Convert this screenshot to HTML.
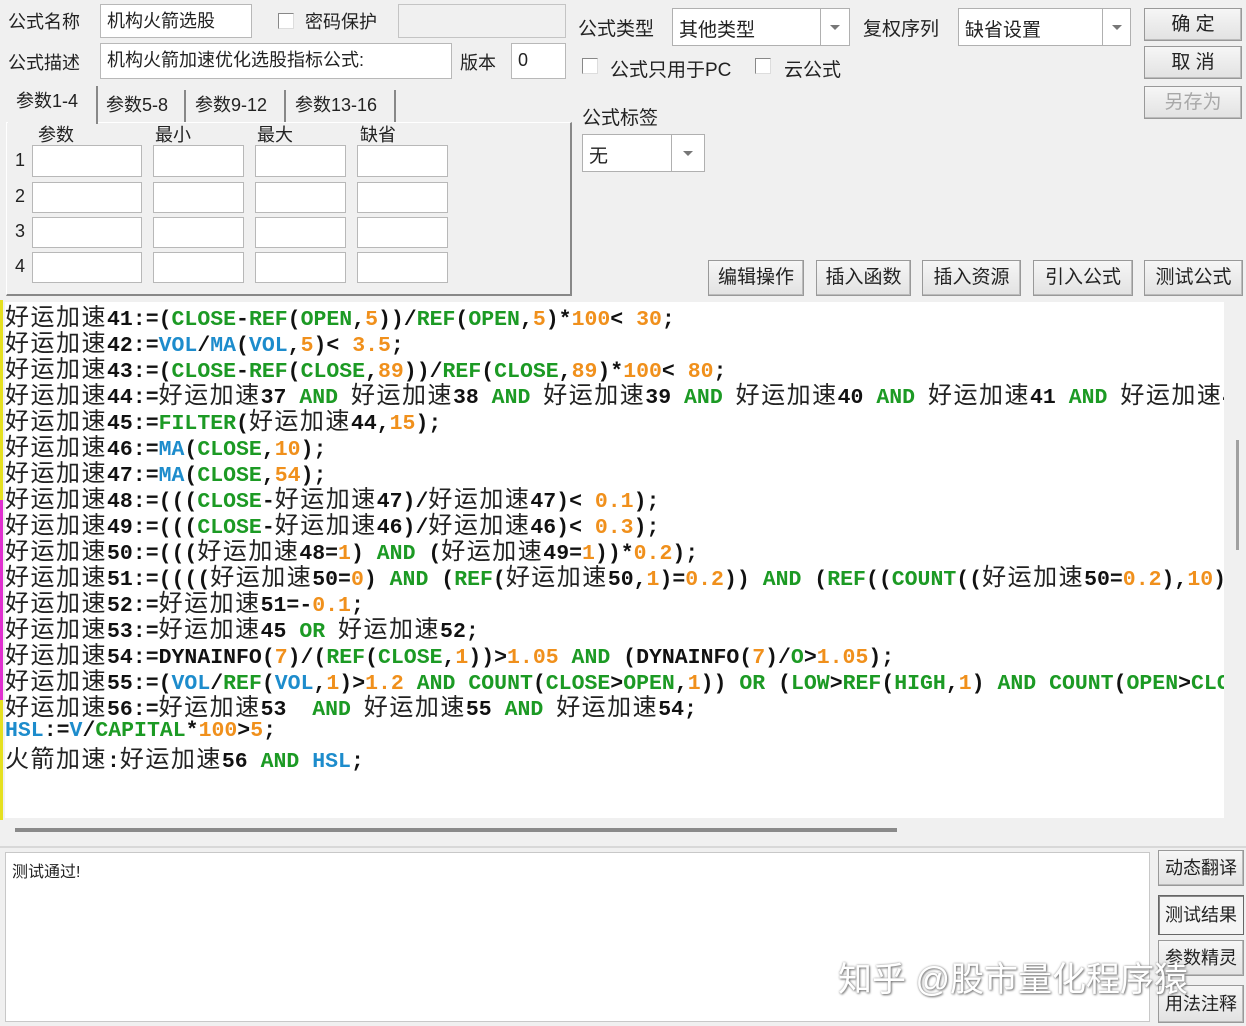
<!DOCTYPE html>
<html><head><meta charset="utf-8">
<style>
*{margin:0;padding:0;box-sizing:border-box}
body{width:1246px;height:1026px;background:#f0f0f0;position:relative;overflow:hidden;font-family:"Liberation Sans","Noto Sans CJK SC",sans-serif;font-size:18px;color:#222}
.a{position:absolute}
.inp{position:absolute;background:#fff;border:1px solid #b8b8b8;padding-left:6px;font-size:18px;line-height:32px}
.dis{position:absolute;background:#f0f0f0;border:1px solid #c4c4c4}
.cb{position:absolute;width:16px;height:16px;background:#fff;border:1px solid #888;border-right-color:#ddd;border-bottom-color:#ddd}
.btn{position:absolute;background:linear-gradient(#f6f6f6,#e2e2e2);border:1px solid #999;box-shadow:inset -1px -1px 0 #bbb;text-align:center;font-size:19px;line-height:32px;color:#222}
.combo{position:absolute;background:#fff;border:1px solid #b0b0b0}
.combo .t{position:absolute;left:6px;top:6px;font-size:19px}
.combo .dd{position:absolute;right:0;top:0;bottom:0;border-left:1px solid #b0b0b0}
.combo .dd:after{content:"";position:absolute;left:50%;top:50%;margin:-2px 0 0 -5px;border:5px solid transparent;border-top:5px solid #777}
.tab{position:absolute;top:90px;height:32px;font-size:18px;line-height:30px;padding-left:8px;border-right:2px solid #888}
.ed{position:absolute;left:5px;top:302px;width:1219px;height:516px;background:#fff;overflow:hidden;font-family:"Liberation Mono",monospace;font-weight:bold;font-size:21.5px;line-height:26px;color:#111}
.ed div{height:26px;white-space:pre}
.c{font-family:"Noto Sans CJK SC",sans-serif;font-weight:normal;font-size:24px;letter-spacing:1.5px;color:#222}
.g{color:#1c9a24}.b{color:#1d8ccc}.o{color:#f0901c}
</style></head><body>
<div class="a" style="left:0;top:300px;width:3px;height:520px;background:#e5e020"></div>
<div class="a" style="left:0;top:500px;width:3px;height:200px;background:#e030d0"></div>

<div class="a" style="left:8px;top:8px">公式名称</div>
<div class="inp" style="left:100px;top:4px;width:152px;height:34px">机构火箭选股</div>
<div class="cb" style="left:278px;top:13px"></div>
<div class="a" style="left:305px;top:8px">密码保护</div>
<div class="dis" style="left:398px;top:4px;width:168px;height:34px"></div>
<div class="a" style="left:8px;top:49px">公式描述</div>
<div class="inp" style="left:100px;top:43px;width:352px;height:36px">机构火箭加速优化选股指标公式:</div>
<div class="a" style="left:460px;top:49px">版本</div>
<div class="inp" style="left:511px;top:43px;width:55px;height:36px">0</div>

<div class="a" style="left:6px;top:122px;width:566px;height:174px;border:1px solid #fff;border-right:2px solid #888;border-bottom:2px solid #888"></div>
<div class="tab" style="left:8px;top:86px;height:38px;background:#f0f0f0;width:90px;z-index:2">参数1-4</div>
<div class="tab" style="left:98px;width:88px">参数5-8</div>
<div class="tab" style="left:187px;width:99px">参数9-12</div>
<div class="tab" style="left:287px;width:109px">参数13-16</div>
<div class="a" style="left:38px;top:121px">参数</div>
<div class="a" style="left:155px;top:121px">最小</div>
<div class="a" style="left:257px;top:121px">最大</div>
<div class="a" style="left:360px;top:121px">缺省</div>
<div class="a" style="left:15px;top:150px">1</div>
<div class="a" style="left:15px;top:186px">2</div>
<div class="a" style="left:15px;top:221px">3</div>
<div class="a" style="left:15px;top:256px">4</div>
<div class="inp" style="left:32px;top:145px;width:110px;height:32px"></div><div class="inp" style="left:153px;top:145px;width:91px;height:32px"></div><div class="inp" style="left:255px;top:145px;width:91px;height:32px"></div><div class="inp" style="left:357px;top:145px;width:91px;height:32px"></div>
<div class="inp" style="left:32px;top:182px;width:110px;height:31px"></div><div class="inp" style="left:153px;top:182px;width:91px;height:31px"></div><div class="inp" style="left:255px;top:182px;width:91px;height:31px"></div><div class="inp" style="left:357px;top:182px;width:91px;height:31px"></div>
<div class="inp" style="left:32px;top:217px;width:110px;height:31px"></div><div class="inp" style="left:153px;top:217px;width:91px;height:31px"></div><div class="inp" style="left:255px;top:217px;width:91px;height:31px"></div><div class="inp" style="left:357px;top:217px;width:91px;height:31px"></div>
<div class="inp" style="left:32px;top:252px;width:110px;height:31px"></div><div class="inp" style="left:153px;top:252px;width:91px;height:31px"></div><div class="inp" style="left:255px;top:252px;width:91px;height:31px"></div><div class="inp" style="left:357px;top:252px;width:91px;height:31px"></div>

<div class="a" style="left:578px;top:14px;font-size:19px">公式类型</div>
<div class="combo" style="left:672px;top:8px;width:178px;height:38px"><span class="t">其他类型</span><div class="dd" style="width:29px"></div></div>
<div class="a" style="left:863px;top:14px;font-size:19px">复权序列</div>
<div class="combo" style="left:958px;top:8px;width:173px;height:38px"><span class="t">缺省设置</span><div class="dd" style="width:28px"></div></div>
<div class="btn" style="left:1144px;top:8px;width:98px;height:33px">确 定</div>
<div class="btn" style="left:1144px;top:46px;width:98px;height:33px">取 消</div>
<div class="btn" style="left:1144px;top:86px;width:98px;height:33px;color:#a8a8a8">另存为</div>
<div class="cb" style="left:582px;top:58px"></div>
<div class="a" style="left:610px;top:55px;font-size:19px">公式只用于PC</div>
<div class="cb" style="left:755px;top:58px"></div>
<div class="a" style="left:784px;top:55px;font-size:19px">云公式</div>
<div class="a" style="left:582px;top:103px;font-size:19px">公式标签</div>
<div class="combo" style="left:582px;top:134px;width:123px;height:38px"><span class="t">无</span><div class="dd" style="width:33px"></div></div>

<div class="btn" style="left:708px;top:260px;width:96px;height:36px;line-height:34px">编辑操作</div>
<div class="btn" style="left:816px;top:260px;width:95px;height:36px;line-height:34px">插入函数</div>
<div class="btn" style="left:922px;top:260px;width:99px;height:36px;line-height:34px">插入资源</div>
<div class="btn" style="left:1033px;top:260px;width:100px;height:36px;line-height:34px">引入公式</div>
<div class="btn" style="left:1144px;top:260px;width:99px;height:36px;line-height:34px">测试公式</div>

<div class="ed"><div><span class="c">好运加速</span>41:=(<span class="g">CLOSE</span>-<span class="g">REF</span>(<span class="g">OPEN</span>,<span class="o">5</span>))/<span class="g">REF</span>(<span class="g">OPEN</span>,<span class="o">5</span>)*<span class="o">100</span>&lt; <span class="o">30</span>;</div><div><span class="c">好运加速</span>42:=<span class="b">VOL</span>/<span class="b">MA</span>(<span class="b">VOL</span>,<span class="o">5</span>)&lt; <span class="o">3.5</span>;</div><div><span class="c">好运加速</span>43:=(<span class="g">CLOSE</span>-<span class="g">REF</span>(<span class="g">CLOSE</span>,<span class="o">89</span>))/<span class="g">REF</span>(<span class="g">CLOSE</span>,<span class="o">89</span>)*<span class="o">100</span>&lt; <span class="o">80</span>;</div><div><span class="c">好运加速</span>44:=<span class="c">好运加速</span>37 <span class="g">AND</span> <span class="c">好运加速</span>38 <span class="g">AND</span> <span class="c">好运加速</span>39 <span class="g">AND</span> <span class="c">好运加速</span>40 <span class="g">AND</span> <span class="c">好运加速</span>41 <span class="g">AND</span> <span class="c">好运加速</span>42</div><div><span class="c">好运加速</span>45:=<span class="g">FILTER</span>(<span class="c">好运加速</span>44,<span class="o">15</span>);</div><div><span class="c">好运加速</span>46:=<span class="b">MA</span>(<span class="g">CLOSE</span>,<span class="o">10</span>);</div><div><span class="c">好运加速</span>47:=<span class="b">MA</span>(<span class="g">CLOSE</span>,<span class="o">54</span>);</div><div><span class="c">好运加速</span>48:=(((<span class="g">CLOSE</span>-<span class="c">好运加速</span>47)/<span class="c">好运加速</span>47)&lt; <span class="o">0.1</span>);</div><div><span class="c">好运加速</span>49:=(((<span class="g">CLOSE</span>-<span class="c">好运加速</span>46)/<span class="c">好运加速</span>46)&lt; <span class="o">0.3</span>);</div><div><span class="c">好运加速</span>50:=(((<span class="c">好运加速</span>48=<span class="o">1</span>) <span class="g">AND</span> (<span class="c">好运加速</span>49=<span class="o">1</span>))*<span class="o">0.2</span>);</div><div><span class="c">好运加速</span>51:=((((<span class="c">好运加速</span>50=<span class="o">0</span>) <span class="g">AND</span> (<span class="g">REF</span>(<span class="c">好运加速</span>50,<span class="o">1</span>)=<span class="o">0.2</span>)) <span class="g">AND</span> (<span class="g">REF</span>((<span class="g">COUNT</span>((<span class="c">好运加速</span>50=<span class="o">0.2</span>),<span class="o">10</span>)</div><div><span class="c">好运加速</span>52:=<span class="c">好运加速</span>51=-<span class="o">0.1</span>;</div><div><span class="c">好运加速</span>53:=<span class="c">好运加速</span>45 <span class="g">OR</span> <span class="c">好运加速</span>52;</div><div><span class="c">好运加速</span>54:=DYNAINFO(<span class="o">7</span>)/(<span class="g">REF</span>(<span class="g">CLOSE</span>,<span class="o">1</span>))&gt;<span class="o">1.05</span> <span class="g">AND</span> (DYNAINFO(<span class="o">7</span>)/<span class="g">O</span>&gt;<span class="o">1.05</span>);</div><div><span class="c">好运加速</span>55:=(<span class="b">VOL</span>/<span class="g">REF</span>(<span class="b">VOL</span>,<span class="o">1</span>)&gt;<span class="o">1.2</span> <span class="g">AND</span> <span class="g">COUNT</span>(<span class="g">CLOSE</span>&gt;<span class="g">OPEN</span>,<span class="o">1</span>)) <span class="g">OR</span> (<span class="g">LOW</span>&gt;<span class="g">REF</span>(<span class="g">HIGH</span>,<span class="o">1</span>) <span class="g">AND</span> <span class="g">COUNT</span>(<span class="g">OPEN</span>&gt;<span class="g">CLOSE</span></div><div><span class="c">好运加速</span>56:=<span class="c">好运加速</span>53  <span class="g">AND</span> <span class="c">好运加速</span>55 <span class="g">AND</span> <span class="c">好运加速</span>54;</div><div><span class="b">HSL</span>:=<span class="b">V</span>/<span class="g">CAPITAL</span>*<span class="o">100</span>&gt;<span class="o">5</span>;</div><div><span class="c">火箭加速</span>:<span class="c">好运加速</span>56 <span class="g">AND</span> <span class="b">HSL</span>;</div></div>
<div class="a" style="left:1224px;top:302px;width:19px;height:516px;background:#f0f0f0"></div>
<div class="a" style="left:1236px;top:440px;width:3px;height:110px;background:#a0a0a0"></div>
<div class="a" style="left:15px;top:828px;width:882px;height:4px;background:#8a8a8a"></div>
<div class="a" style="left:0;top:846px;width:1246px;height:2px;background:#d8d8d8"></div>

<div class="a" style="left:5px;top:852px;width:1145px;height:170px;background:#fff;border:1px solid #c8c8c8"></div>
<div class="a" style="left:12px;top:858px;font-size:16px">测试通过!</div>
<div class="btn" style="left:1158px;top:850px;width:86px;height:36px;line-height:34px;font-size:18px">动态翻译</div>
<div class="btn" style="left:1158px;top:895px;width:86px;height:40px;line-height:38px;font-size:18px;background:#f4f4f4;border-color:#666;box-shadow:inset 1px 1px 0 #888">测试结果</div>
<div class="btn" style="left:1158px;top:940px;width:86px;height:36px;line-height:34px;font-size:18px">参数精灵</div>
<div class="btn" style="left:1158px;top:985px;width:86px;height:38px;line-height:36px;font-size:18px">用法注释</div>
<div class="a" style="left:838px;top:952px;font-size:34px;color:#fff;text-shadow:1px 1px 2px #777,0 0 2px #999;white-space:nowrap">知乎 @股市量化程序猿</div>
</body></html>
